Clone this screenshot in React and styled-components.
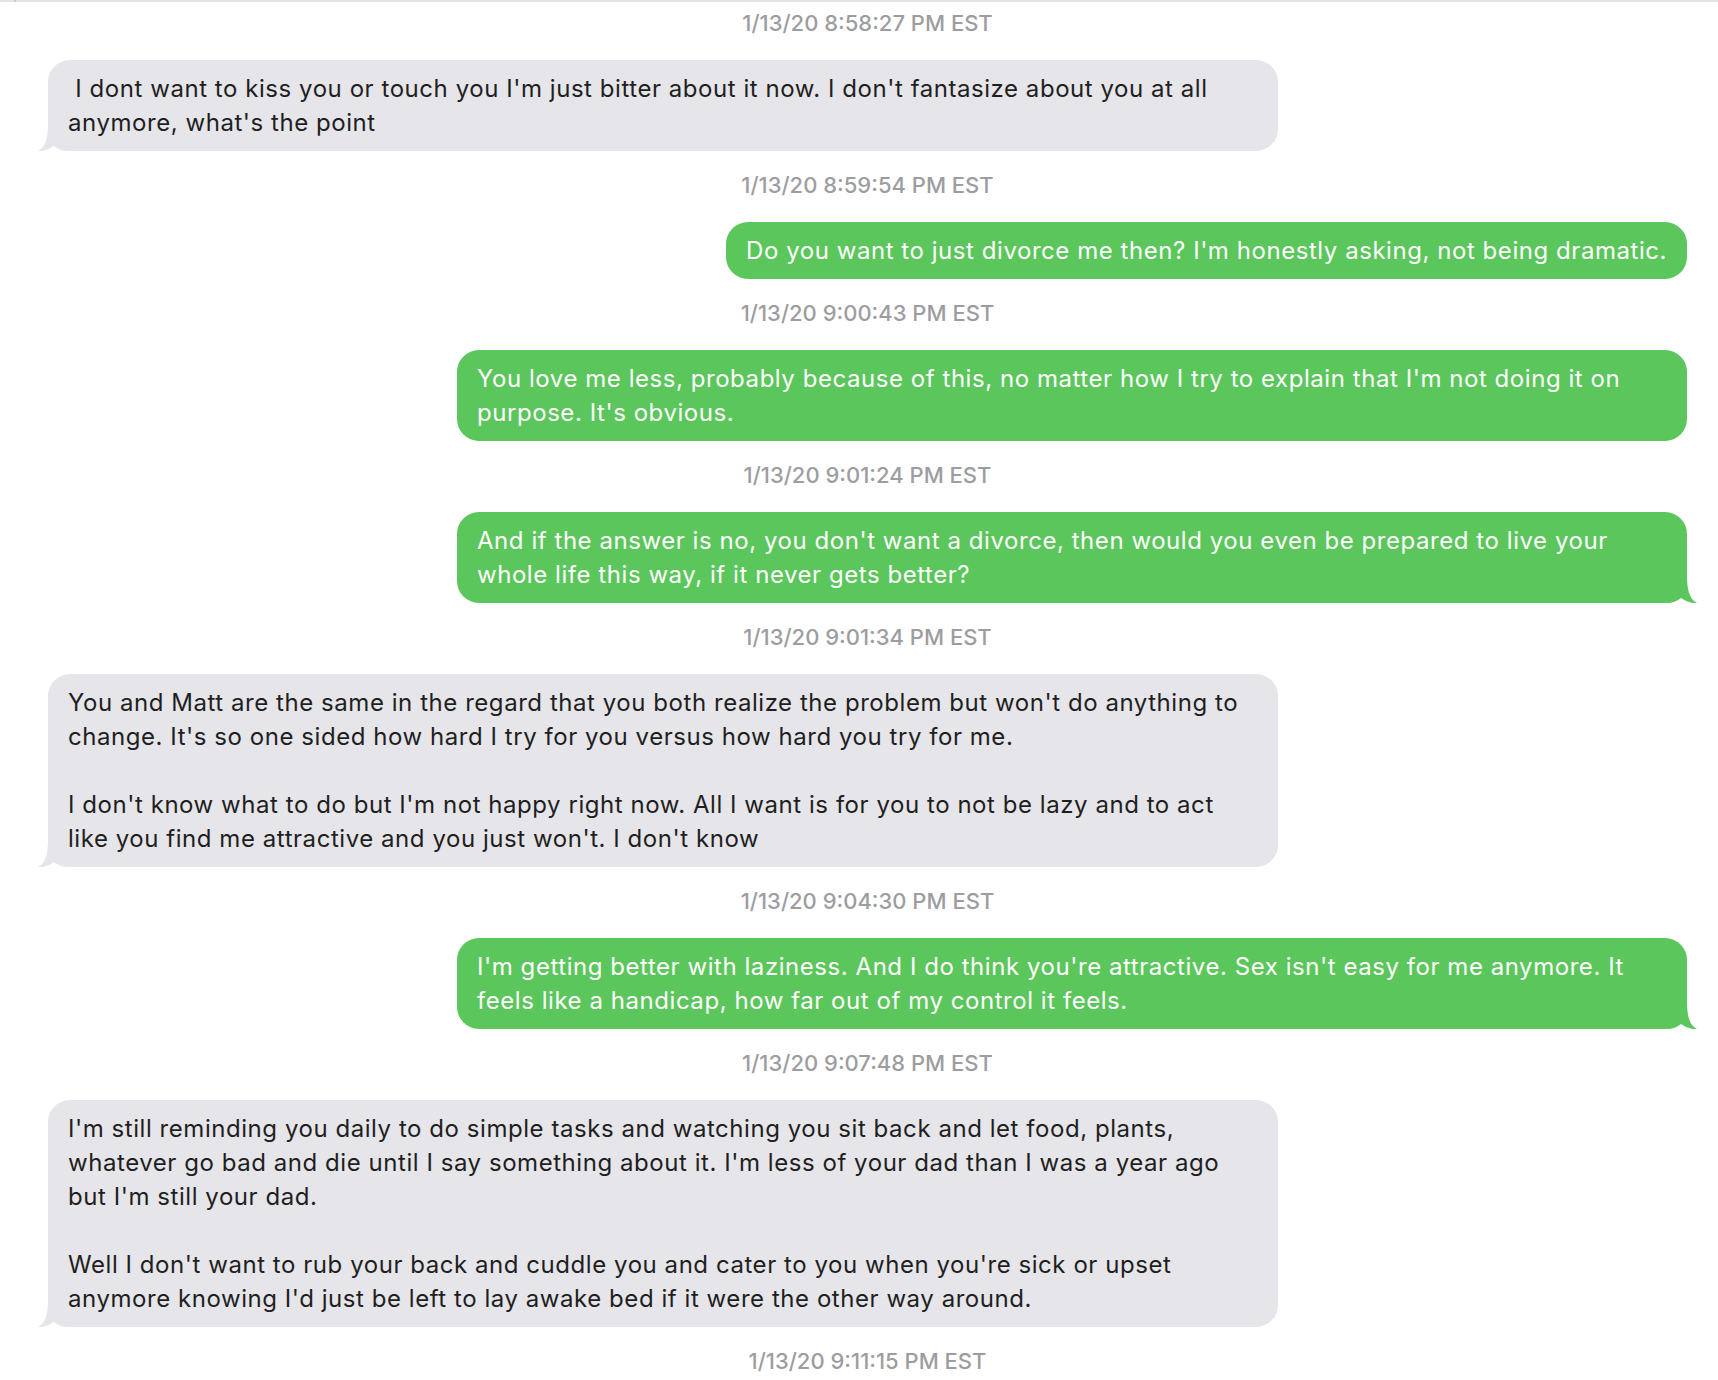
import React from "react";
import styled, { createGlobalStyle } from "styled-components";

const GlobalStyle = createGlobalStyle`
  html, body {
    margin: 0;
    padding: 0;
    background: #ffffff;
  }
  body {
    font-family: Inter, "Noto Sans", "Liberation Sans", sans-serif;
    -webkit-font-smoothing: antialiased;
  }
`;

const TopRule = styled.div`
  position: relative;
  height: 2px;
  background: #e4e4e4;
  &::after {
    content: "";
    position: absolute;
    left: 14px;
    top: 0;
    width: 2px;
    height: 2px;
    background: #c9c9c9;
  }
`;

const Thread = styled.div`
  display: flex;
  flex-direction: column;
  padding: 0 31px 40px 48px;
`;

const Stamp = styled.div`
  align-self: center;
  font-size: 22px;
  line-height: 24px;
  font-weight: 500;
  color: #9d9da1;
  margin: ${(p) => (p.$first ? "9px" : "22px")} 0 25px;
`;

const Row = styled.div`
  display: flex;
  justify-content: ${(p) => (p.$me ? "flex-end" : "flex-start")};
`;

const Bubble = styled.div`
  position: relative;
  max-width: 1230px;
  box-sizing: border-box;
  padding: 11.5px 20px;
  border-radius: 22px;
  font-size: 24px;
  letter-spacing: 0.55px;
  line-height: 34px;
  background: ${(p) => (p.$me ? "#5bc65b" : "#e5e5ea")};
  color: ${(p) => (p.$me ? "#ffffff" : "#1f1f21")};
  white-space: pre-wrap;
`;

const Tail = styled.svg`
  position: absolute;
  bottom: 0;
  width: 30px;
  height: 28px;
  ${(p) => (p.$me ? "right: -10px; transform: scaleX(-1);" : "left: -10px;")}
  fill: ${(p) => (p.$me ? "#5bc65b" : "#e5e5ea")};
`;

const Text = styled.span`
  position: relative;
`;

const messages = [
  {
    time: "1/13/20 8:58:27 PM EST",
    me: false,
    tail: true,
    text: " I dont want to kiss you or touch you I'm just bitter about it now. I don't fantasize about you at all anymore, what's the point",
  },
  {
    time: "1/13/20 8:59:54 PM EST",
    me: true,
    tail: false,
    text: "Do you want to just divorce me then? I'm honestly asking, not being dramatic.",
  },
  {
    time: "1/13/20 9:00:43 PM EST",
    me: true,
    tail: false,
    text: "You love me less, probably because of this, no matter how I try to explain that I'm not doing it on purpose. It's obvious.",
  },
  {
    time: "1/13/20 9:01:24 PM EST",
    me: true,
    tail: true,
    text: "And if the answer is no, you don't want a divorce, then would you even be prepared to live your whole life this way, if it never gets better?",
  },
  {
    time: "1/13/20 9:01:34 PM EST",
    me: false,
    tail: true,
    text: "You and Matt are the same in the regard that you both realize the problem but won't do anything to change. It's so one sided how hard I try for you versus how hard you try for me.\n\nI don't know what to do but I'm not happy right now. All I want is for you to not be lazy and to act like you find me attractive and you just won't. I don't know",
  },
  {
    time: "1/13/20 9:04:30 PM EST",
    me: true,
    tail: true,
    text: "I'm getting better with laziness. And I do think you're attractive. Sex isn't easy for me anymore. It feels like a handicap, how far out of my control it feels.",
  },
  {
    time: "1/13/20 9:07:48 PM EST",
    me: false,
    tail: true,
    text: "I'm still reminding you daily to do simple tasks and watching you sit back and let food, plants, whatever go bad and die until I say something about it. I'm less of your dad than I was a year ago but I'm still your dad.\n\nWell I don't want to rub your back and cuddle you and cater to you when you're sick or upset anymore knowing I'd just be left to lay awake bed if it were the other way around.",
  },
];

export default function App() {
  return (
    <>
      <GlobalStyle />
      <TopRule />
      <Thread>
        {messages.map((m, i) => (
          <React.Fragment key={i}>
            <Stamp $first={i === 0}>{m.time}</Stamp>
            <Row $me={m.me}>
              <Bubble $me={m.me}>
                {m.tail && (
                  <Tail $me={m.me} viewBox="0 0 30 28" aria-hidden="true">
                    <path d="M10 0 C10 14 8 24 0 28 Q8 29 16 23 Q22 28 30 28 L30 0 Z" />
                  </Tail>
                )}
                <Text>{m.text}</Text>
              </Bubble>
            </Row>
          </React.Fragment>
        ))}
        <Stamp>1/13/20 9:11:15 PM EST</Stamp>
      </Thread>
    </>
  );
}
